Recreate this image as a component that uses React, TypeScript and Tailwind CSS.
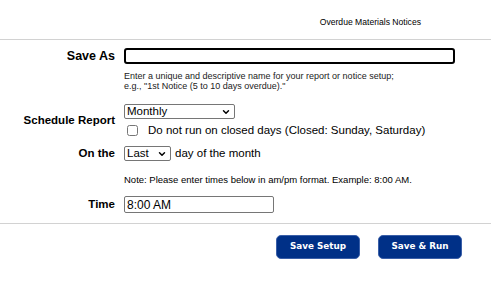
import { ChevronDown } from 'lucide-react'

const App = () => {
  return (
    <div className="w-[491px] h-[282px] bg-white text-black font-['Liberation_Sans',Arial,sans-serif]">
      {/* header */}
      <div className="h-[39px] pt-[6px] flex items-center justify-end pr-[70px] text-[8.6px]">
        Overdue Materials Notices
      </div>
      <div className="h-px bg-[#d2d2d2]" />

      <div className="grid grid-cols-[115px_1fr] gap-x-[9px]">
        {/* save as */}
        <div className="mt-[8px] h-[16px] flex items-center justify-end text-[12.5px] font-bold">Save As</div>
        <div className="mt-[8px] h-[16px]">
          <input
            type="text"
            className="block w-[331px] h-[16px] border-2 border-black rounded-[3px] outline-none"
          />
        </div>

        <div />
        <div className="mt-[7px] text-[9px] leading-[10px] text-[#222]">
          <div>Enter a unique and descriptive name for your report or notice setup;</div>
          <div>e.g., "1st Notice (5 to 10 days overdue)."</div>
        </div>

        {/* schedule */}
        <div className="mt-[13px] flex items-center justify-end text-[11.5px] font-bold">Schedule Report</div>
        <div className="mt-[13px] flex flex-col">
          <div className="relative w-[111px] h-[15px]">
            <select className="block appearance-none w-full h-full border border-[#767676] rounded-[2px] pl-[2px] py-0 text-[11.5px] leading-[13px] bg-white">
              <option>Monthly</option>
            </select>
            <ChevronDown className="absolute right-[4px] top-[3px] w-[10px] h-[10px] pointer-events-none" strokeWidth={3.5} />
          </div>
          <label className="mt-[4px] h-[14px] flex items-center text-[11.5px] leading-[14px]">
            <input type="checkbox" className="m-0 ml-[3px] w-[11px] h-[11px]" />
            <span className="ml-[10px]">Do not run on closed days (Closed: Sunday, Saturday)</span>
          </label>
        </div>

        {/* on the */}
        <div className="mt-[9px] h-[15px] flex items-center justify-end text-[11.5px] font-bold">On the</div>
        <div className="mt-[9px] h-[15px] flex items-center text-[11.5px]">
          <div className="relative w-[47px] h-[15px]">
            <select className="block appearance-none w-full h-full border border-[#767676] rounded-[2px] pl-[2px] py-0 text-[11.5px] leading-[13px] bg-white">
              <option>Last</option>
            </select>
            <ChevronDown className="absolute right-[4px] top-[3px] w-[10px] h-[10px] pointer-events-none" strokeWidth={3.5} />
          </div>
          <span className="ml-[4px]">day of the month</span>
        </div>

        <div />
        <div className="mt-[12px] h-[14px] text-[9.5px] leading-[14px]">
          Note: Please enter times below in am/pm format. Example: 8:00 AM.
        </div>

        {/* time */}
        <div className="mt-[9px] h-[17px] flex items-center justify-end text-[11.5px] font-bold">Time</div>
        <div className="mt-[9px] h-[17px]">
          <input
            type="text"
            defaultValue="8:00 AM"
            className="block w-[150px] h-[17px] border border-[#767676] rounded-[2px] px-[2px] text-[12px] outline-none"
          />
        </div>
      </div>

      <div className="mt-[10px] h-px bg-[#d2d2d2]" />

      {/* actions */}
      <div className="mt-[11px] flex justify-end gap-[18px] pr-[29px] font-['DejaVu_Sans',Verdana,sans-serif]">
        <button className="w-[84px] h-[24px] rounded-[5px] bg-[#003087] border border-[#3a5fa8] text-white text-[8.8px] font-bold">
          Save Setup
        </button>
        <button className="w-[84px] h-[24px] rounded-[5px] bg-[#003087] border border-[#3a5fa8] text-white text-[8.8px] font-bold">
          Save &amp; Run
        </button>
      </div>
    </div>
  )
}

export default App
